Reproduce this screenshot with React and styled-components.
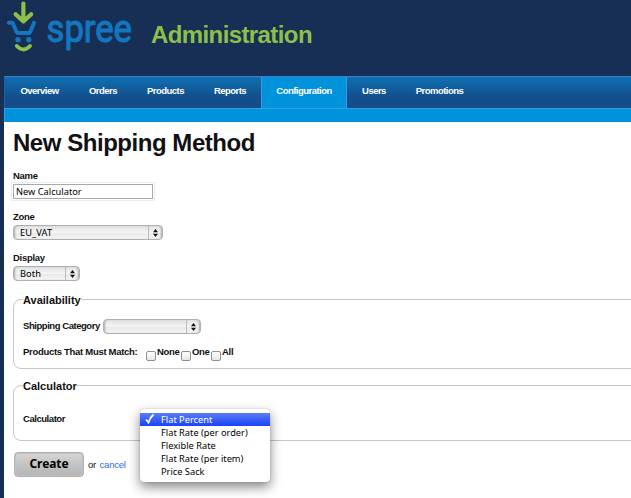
import React from "react";
import styled, { createGlobalStyle } from "styled-components";

const GlobalStyle = createGlobalStyle`
  * { box-sizing: border-box; }
  body {
    margin: 0;
    background: #172f54;
    font-family: "Liberation Sans", Arial, sans-serif;
    overflow: hidden;
  }
`;

const lucida = `"Noto Sans", "Lucida Grande", sans-serif`;

const Page = styled.div`
  width: 631px;
  height: 498px;
  overflow: hidden;
  padding-left: 4px;
  background: #172f54;
`;

const Header = styled.header`
  height: 76px;
  display: flex;
  align-items: flex-start;
`;

const Logo = styled.svg`
  width: 140px;
  height: 76px;
  flex: none;
`;

const SiteTitle = styled.h1`
  margin: 21px 0 0 7px;
  font-size: 24px;
  line-height: 28px;
  letter-spacing: -0.6px;
  color: #8dbf4b;
`;

const Nav = styled.nav`
  height: 32px;
  display: flex;
  border-top: 1px solid #3f7ad3;
  border-left: 1px solid #2c5aa6;
  background: linear-gradient(#0d71b2, #144e8c 65%, #154b89);
`;

const Tab = styled.a`
  width: ${(p) => p.$width}px;
  height: 31px;
  padding-bottom: 4px;
  display: flex;
  align-items: center;
  justify-content: center;
  font-size: 9.5px;
  font-weight: bold;
  letter-spacing: -0.53px;
  color: #fff;
  background: ${(p) => (p.$active ? "#0093db" : "transparent")};
  border: solid ${(p) => (p.$active ? "#3f97e4" : "transparent")};
  border-width: 0 1px;
`;

const SubNav = styled.div`
  height: 14px;
  border-top: 1px solid #359cea;
  border-left: 1px solid #359cea;
  background: #0093db;
`;

const Content = styled.main`
  height: 376px;
  padding: 7px 0 0 9px;
  background: #fff;
  color: #111;
`;

const Title = styled.h2`
  margin: 0 0 12px;
  font-size: 24px;
  line-height: 28px;
  letter-spacing: -0.46px;
  white-space: nowrap;
`;

const Field = styled.div`
  height: 41px;
`;

const Label = styled.label`
  display: block;
  width: ${(p) => (p.$width ? `${p.$width}px` : "auto")};
  height: 14px;
  line-height: 14px;
  font-size: 9.5px;
  font-weight: bold;
  letter-spacing: ${(p) => p.$spacing ?? -0.3}px;
  white-space: nowrap;
`;

const TextInput = styled.input`
  display: block;
  width: 140px;
  height: 15px;
  margin-top: 1px;
  padding: 0 2px;
  border: 1px solid #aaa;
  border-radius: 0;
  outline: 1px solid #e4edf7;
  outline-offset: 1px;
  font-family: ${lucida};
  font-size: 9.25px;
  color: #000;
`;

const SelectBox = styled.div`
  width: ${(p) => p.$width}px;
  height: 15px;
  margin-top: ${(p) => p.$top ?? 1}px;
  display: flex;
  align-items: center;
  border: 1px solid #b0b0b0;
  border-radius: 4px;
  background: linear-gradient(#e2e2e2, #f4f4f4 50%, #e8e8e8 55%, #f6f6f6);
  box-shadow: inset 2px 0 2px -1px #aaa, inset -2px 0 2px -1px #aaa;
  font-family: ${lucida};
  font-size: 9.25px;
  line-height: 13px;
  letter-spacing: 0.1px;
  color: #000;
`;

const SelectValue = styled.span`
  flex: 1;
  padding: 0 0 1px 6px;
`;

const SelectArrows = styled.span`
  width: 14px;
  height: 13px;
  display: flex;
  align-items: center;
  justify-content: center;
  border-left: 1px solid #bbb;
`;

const Fieldset = styled.section`
  width: 640px;
  height: ${(p) => p.$height}px;
  margin-top: ${(p) => p.$top}px;
  padding-left: 9px;
  border: 1px solid #c6c6c6;
  border-radius: 8px;
`;

const Legend = styled.h3`
  width: ${(p) => p.$width}px;
  height: 14px;
  margin: -7px 0 0;
  font-size: 11px;
  line-height: 14px;
  letter-spacing: 0;
  background: #fff;
`;

const Row = styled.div`
  display: flex;
  margin-top: ${(p) => p.$top}px;
`;

const Check = styled.span`
  width: 10px;
  height: 10px;
  margin: 6px 1px 0 0;
  border: 1px solid #8f8f8f;
  border-radius: 2px;
  background: linear-gradient(#fff, #e6e6e6);
`;

const Actions = styled.div`
  display: flex;
  margin: 11px 0 0 1px;
`;

const CreateButton = styled.button`
  width: 70px;
  height: 25px;
  padding: 0 0 1px;
  border: 1px solid #b0b0b0;
  border-radius: 4px;
  background: linear-gradient(#d6d6d6, #c3c3c3 50%, #b5b5b5);
  box-shadow: inset 0 0 0 1px #c2c2c2;
  font: bold 12px/20px ${lucida};
  letter-spacing: -0.1px;
  color: #000;
`;

const Alternative = styled.span`
  margin: 6px 0 0 4px;
  font-size: 9.5px;
  line-height: 14px;
  letter-spacing: -0.2px;
`;

const Cancel = styled.a`
  margin-left: 1px;
  color: #2a6bf0;
`;

const Menu = styled.ul`
  position: absolute;
  left: 140px;
  top: 409px;
  width: 130px;
  height: 73px;
  margin: 0;
  padding: 4px 0;
  list-style: none;
  border-radius: 4px;
  background: #fff;
  box-shadow: 0 5px 12px rgba(0, 0, 0, 0.48), 0 0 1px rgba(0, 0, 0, 0.4);
`;

const MenuItem = styled.li`
  height: 13px;
  display: flex;
  align-items: center;
  font-family: ${lucida};
  font-size: 9.25px;
  line-height: 13px;
  white-space: nowrap;
  color: ${(p) => (p.$selected ? "#fff" : "#000")};
  background: ${(p) => (p.$selected ? "linear-gradient(#5a7df5, #1a42fb)" : "none")};
`;

const Mark = styled.span`
  width: 21px;
  height: 13px;
  padding-left: 5px;
`;

const tabs = [
  ["Overview", 69],
  ["Orders", 58],
  ["Products", 67],
  ["Reports", 62],
  ["Configuration", 86],
  ["Users", 54],
  ["Promotions", 77],
];

const options = [
  "Flat Percent",
  "Flat Rate (per order)",
  "Flexible Rate",
  "Flat Rate (per item)",
  "Price Sack",
];

function Select({ value, width, top }) {
  return (
    <SelectBox $width={width} $top={top}>
      <SelectValue>{value}</SelectValue>
      <SelectArrows>
        <svg width="5" height="8" viewBox="0 0 5 8">
          <path d="M0 3.2 2.5 0 5 3.2ZM0 4.8h5L2.5 8Z" fill="#111" />
        </svg>
      </SelectArrows>
    </SelectBox>
  );
}

function SpreeLogo() {
  return (
    <Logo viewBox="4 0 140 76" fill="none" strokeLinecap="round" strokeLinejoin="round">
      <path d="M8.8 22.8h2.6q1.3 0 1.8 1.2l3.2 7.8q.5 1.2 1.8 1.2h10.4q1.3 0 1.8-1.2l3.6-9" stroke="#1376bf" strokeWidth="3.9" />
      <path d="M23.4 3.5v17.5M15.6 14.2l7.8 7.2 7.8-7.2" stroke="#8dbf4b" strokeWidth="4.2" />
      <circle cx="18" cy="39.7" r="2.7" fill="#1376bf" />
      <circle cx="28.8" cy="39.7" r="2.7" fill="#1376bf" />
      <path d="M16.8 46q6.6 7 13.2 0" stroke="#8dbf4b" strokeWidth="3.8" />
      <text
        x="46.5"
        y="42"
        textLength="85.5"
        lengthAdjust="spacingAndGlyphs"
        fontFamily="Roboto, sans-serif"
        fontSize="39"
        fill="#1376bf"
        stroke="#1376bf"
        strokeWidth="1.1"
      >
        spree
      </text>
    </Logo>
  );
}

export default function App() {
  return (
    <Page>
      <GlobalStyle />
      <Header>
        <SpreeLogo />
        <SiteTitle>Administration</SiteTitle>
      </Header>
      <Nav>
        {tabs.map(([name, width]) => (
          <Tab key={name} $width={width} $active={name === "Configuration"}>
            {name}
          </Tab>
        ))}
      </Nav>
      <SubNav />
      <Content>
        <Title>New Shipping Method</Title>
        <Field>
          <Label>Name</Label>
          <TextInput defaultValue="New Calculator" />
        </Field>
        <Field>
          <Label>Zone</Label>
          <Select value="EU_VAT" width={150} />
        </Field>
        <Field>
          <Label>Display</Label>
          <Select value="Both" width={67} />
        </Field>
        <Fieldset $height={70} $top={7}>
          <Legend $width={58}>Availability</Legend>
          <Row $top={12}>
            <Label $width={80} $spacing={-0.45}>Shipping Category</Label>
            <Select value="" width={98} top={0} />
          </Row>
          <Row $top={11}>
            <Label $width={123}>Products That Must Match:</Label>
            <Check />
            <Label $width={24}>None</Label>
            <Check />
            <Label $width={19}>One</Label>
            <Check />
            <Label>All</Label>
          </Row>
        </Fieldset>
        <Fieldset $height={56} $top={16}>
          <Legend $width={54}>Calculator</Legend>
          <Row $top={19}>
            <Label $spacing={-0.45}>Calculator</Label>
          </Row>
        </Fieldset>
        <Actions>
          <CreateButton>Create</CreateButton>
          <Alternative>
            or <Cancel>cancel</Cancel>
          </Alternative>
        </Actions>
      </Content>
      <Menu>
        {options.map((option, i) => (
          <MenuItem key={option} $selected={i === 0}>
            <Mark>
              {i === 0 && (
                <svg width="10" height="11" viewBox="0 0 10 11">
                  <path d="M1 6.5 3.5 9.5Q5 4.5 8.5 1.5" fill="none" stroke="#fff" strokeWidth="1.8" />
                </svg>
              )}
            </Mark>
            {option}
          </MenuItem>
        ))}
      </Menu>
    </Page>
  );
}
